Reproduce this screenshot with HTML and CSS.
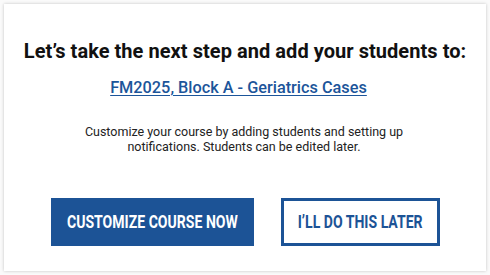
FILE: index.html
```html
<!DOCTYPE html>
<html>
<head>
<meta charset="utf-8">
<link rel="stylesheet" href="styles.css">
</head>
<body>
<div class="card">
  <h1 class="title">Let’s take the next step and add your students to:</h1>
  <a class="course" href="#">FM2025, Block A - Geriatrics Cases</a>
  <p class="desc">Customize your course by adding students and setting up<br>notifications. Students can be edited later.</p>
  <div class="actions">
    <button class="btn btn-primary"><span>CUSTOMIZE COURSE NOW</span></button>
    <button class="btn btn-outline"><span>I’LL DO THIS LATER</span></button>
  </div>
</div>
</body>
</html>
```
FILE: styles.css
```css
html, body {
  margin: 0;
  padding: 0;
  background: #fafafa;
}
body {
  padding: 4px;
  width: 490px;
  height: 275px;
  box-sizing: border-box;
  font-family: Roboto, "Liberation Sans", sans-serif;
}
.card {
  background: #fff;
  width: 482px;
  height: 267px;
  box-sizing: border-box;
  box-shadow: 0 0 3px rgba(0,0,0,0.22);
  display: flex;
  flex-direction: column;
  align-items: center;
  padding-top: 35px;
}
.title {
  margin: 0;
  font-size: 20px;
  line-height: 24px;
  font-weight: 700;
  color: #111;
  letter-spacing: 0.05px;
}
.course {
  margin: 14.5px 13px 0 0;
  font-size: 16.3px;
  line-height: 20px;
  font-weight: 500;
  color: #1c559a;
  text-decoration: underline;
  text-underline-offset: 2px;
  text-decoration-thickness: 1px;
}
.desc {
  margin: 26px 2px 0 0;
  font-size: 12.5px;
  line-height: 15px;
  color: #222;
  text-align: center;
}
.actions {
  margin-top: 44.5px;
  display: flex;
  gap: 27px;
}
.btn {
  height: 48px;
  box-sizing: border-box;
  font-family: Roboto, "Liberation Sans", sans-serif;
  font-weight: 700;
  font-size: 18.5px;
  display: flex;
  align-items: center;
  justify-content: center;
  padding: 0;
  cursor: pointer;
}
.btn span {
  display: inline-block;
  transform: scaleX(0.76);
  white-space: nowrap;
}
.btn-primary {
  width: 203px;
  background: #1c5396;
  color: #fff;
  border: none;
}
.btn-outline {
  width: 159px;
  background: #fff;
  color: #1c5396;
  border: 3px solid #1c5396;
}
```
